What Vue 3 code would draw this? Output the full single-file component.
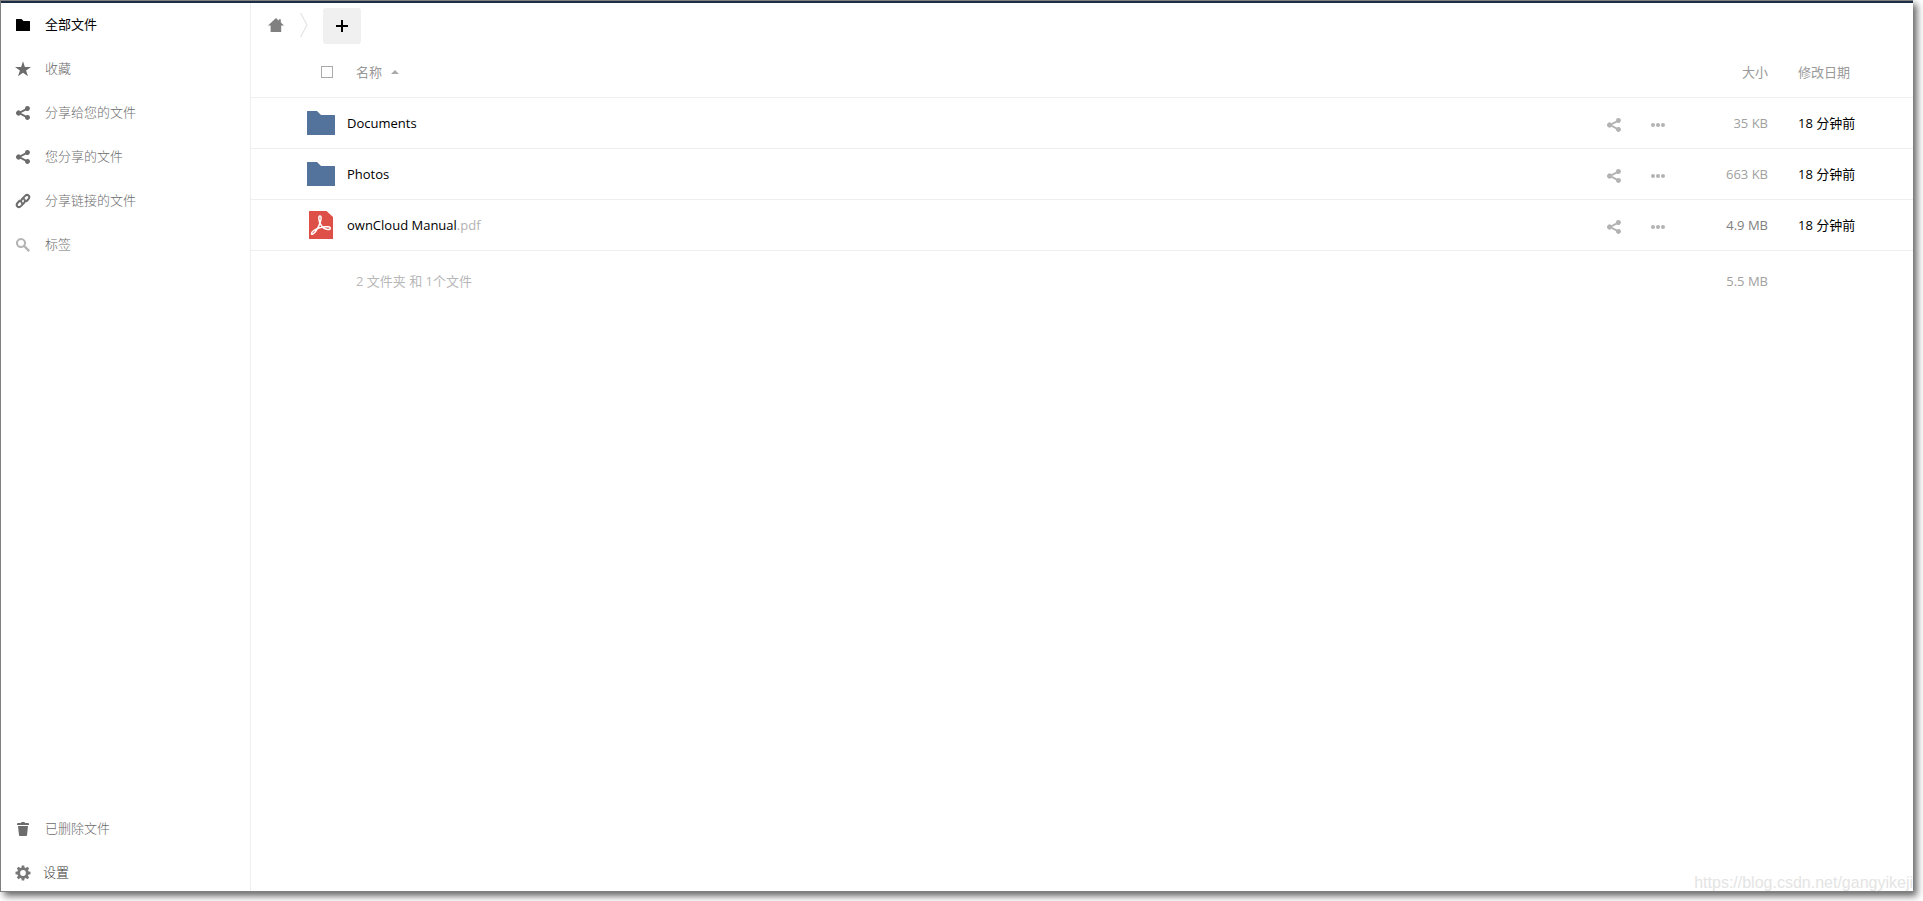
<template>
  <div class="page">
    <div class="window">
      <nav class="sidebar">
        <ul>
          <li v-for="item in menu" :key="item.label">
            <a href="#" :class="{ active: item.active }">
              <svg :class="['icon', { faded: item.faded, link: item.icon === 'link' }]" viewBox="0 0 16 16" aria-hidden="true">
                <path :d="icons[item.icon]" />
              </svg>
              <span>{{ item.label }}</span>
            </a>
          </li>
        </ul>
        <ul class="bottom">
          <li>
            <a href="#">
              <svg class="icon" viewBox="0 0 16 16" aria-hidden="true">
                <path :d="icons.trash" />
              </svg>
              <span>已删除文件</span>
            </a>
          </li>
          <li>
            <button type="button" class="settings">
              <svg class="icon" viewBox="0 0 16 16" aria-hidden="true">
                <circle cx="8" cy="8" r="4.3" fill="none" stroke="currentColor" stroke-width="2.8" />
                <path :d="icons.gear" />
              </svg>
              <span>设置</span>
            </button>
          </li>
        </ul>
      </nav>

      <main class="content">
        <div class="controls">
          <a href="#" class="home" aria-label="主页">
            <svg viewBox="0 0 16 16" aria-hidden="true">
              <path d="M8 1 0 8.6h2.6V15h10.6V8.6H16L12.8 5.6V2.2h-2v1.5z" />
            </svg>
          </a>
          <svg class="crumb" viewBox="0 0 8 24" aria-hidden="true">
            <path d="M.7 0 7 12 .7 24" />
          </svg>
          <button type="button" class="new" aria-label="新建">
            <svg viewBox="0 0 12 12" aria-hidden="true">
              <path d="M5 0h2v5h5v2H7v5H5V7H0V5h5z" />
            </svg>
          </button>
        </div>

        <table>
          <colgroup>
            <col class="col-icon" />
            <col />
            <col class="col-actions" />
            <col class="col-size" />
            <col class="col-date" />
          </colgroup>
          <thead>
            <tr>
              <th class="select">
                <input v-model="selectAll" type="checkbox" aria-label="全选" />
              </th>
              <th class="name-head">
                <button type="button" class="sort" @click="ascending = !ascending">
                  名称
                  <span :class="['arrow', { down: !ascending }]"></span>
                </button>
              </th>
              <th></th>
              <th class="size">大小</th>
              <th>修改日期</th>
            </tr>
          </thead>
          <tbody>
            <tr v-for="file in sortedFiles" :key="file.name">
              <td class="thumb">
                <svg v-if="file.type === 'dir'" viewBox="0 0 32 32" aria-hidden="true">
                  <path fill="#54739c" d="M2.500 4h9.500l4 4h13.500q.5 0 .5.5v19q0 .5-.5.5h-27q-.5 0-.5-.5v-23q0-.5.5-.5z" />
                </svg>
                <svg v-else viewBox="0 0 32 32" aria-hidden="true">
                  <path fill="#de5047" d="M4.500 2H21.500l6.500 6v21.500q0 .5-.5.5h-23q-.5 0-.5-.5v-27q0-.5.5-.5z" />
                  <path class="acrobat" d="M15 7c-1.900 0-1.300 4.500.5 8.200 2 3.800 5.500 5.600 8.500 5.200 2-.3 1.700-2.300-.8-2.600-4.500-.5-10.300.8-14.400 3.700-3.200 2.300-2.700 4.600-.9 3.500 2.700-1.800 6-7.500 7.600-12.500.9-3 .9-5.500-.5-5.500z" />
                </svg>
              </td>
              <td class="name">
                <a href="#">{{ file.name }}<span class="ext">{{ file.ext }}</span></a>
              </td>
              <td>
                <div class="actions">
                  <button type="button" aria-label="分享">
                    <svg viewBox="0 0 16 16" aria-hidden="true"><path :d="icons.share" /></svg>
                  </button>
                  <button type="button" aria-label="更多">
                    <svg viewBox="0 0 16 16" aria-hidden="true">
                      <circle cx="3" cy="8" r="2" />
                      <circle cx="8" cy="8" r="2" />
                      <circle cx="13" cy="8" r="2" />
                    </svg>
                  </button>
                </div>
              </td>
              <td :class="['size', { large: file.large }]">{{ file.size }}</td>
              <td>18 分钟前</td>
            </tr>
          </tbody>
          <tfoot>
            <tr>
              <td></td>
              <td class="summary">2 文件夹 和 1个文件</td>
              <td></td>
              <td class="size">5.5 MB</td>
              <td></td>
            </tr>
          </tfoot>
        </table>
      </main>
      <div class="watermark">https://blog.csdn.net/gangyikeji</div>
    </div>
  </div>
</template>

<script setup>
import { computed, ref } from 'vue'

const icons = {
  folder: 'M1.500 2h5l2 2H14.500q.5 0 .5.5v9q0 .5-.5.5h-13q-.5 0-.5-.5v-11q0-.5.5-.5z',
  star: 'M8 .3 9.900 5.900H16l-4.900 3.500 1.900 5.900L8 11.700 3 15.300l1.900-5.900L0 5.900h6.100z',
  share: 'M12.500 1a2.500 2.500 0 0 0-2.500 2.800L5.300 6.200a2.500 2.500 0 1 0 0 3.600l4.700 2.400a2.500 2.500 0 1 0 .9-1.700L6 8.100V7.900l4.900-2.400A2.500 2.500 0 1 0 12.500 1z',
  link: 'M7.200 10.200C5.800 9.100 5.800 7.400 6.900 6.200l3.200-3.300c2.500-2.400 5.600.5 3.400 3.100L11 8.700M8.800 5.800c1.400 1.100 1.400 2.800.3 4l-3.200 3.300c-2.500 2.400-5.600-.5-3.400-3.100L5 7.300',
  search: 'M6 1a5 5 0 1 0 2.700 9.200l4.700 4.700 1.600-1.600-4.700-4.700A5 5 0 0 0 6 1zm0 2a3 3 0 1 1 0 6 3 3 0 0 1 0-6z',
  trash: 'M6.500 1 6 2H3Q2 2 2 3v1h12V3q0-1-1-1h-3l-.5-1zM3 5l1 9.200q.1.800.9.800h6.200q.8 0 .9-.8L13 5z',
  gear: 'M6.800.5h2.400l.5 3H6.300zM6.800 15.500h2.400l.5-3H6.300zM.5 6.800v2.400l3 .5V6.300zM15.500 6.800v2.400l-3 .5V6.300zM1.800 3.500l1.700-1.700 2.500 1.800-2.400 2.400zM14.200 3.500l-1.700-1.700L10 3.600 12.400 6zM1.800 12.500l1.700 1.700L6 12.400 3.600 10zM14.200 12.500l-1.700 1.700-2.500-1.800 2.400-2.400z'
}

const menu = [
  { label: '全部文件', icon: 'folder', active: true },
  { label: '收藏', icon: 'star' },
  { label: '分享给您的文件', icon: 'share' },
  { label: '您分享的文件', icon: 'share' },
  { label: '分享链接的文件', icon: 'link' },
  { label: '标签', icon: 'search', faded: true }
]

const files = [
  { name: 'Documents', ext: '', type: 'dir', size: '35 KB' },
  { name: 'Photos', ext: '', type: 'dir', size: '663 KB' },
  { name: 'ownCloud Manual', ext: '.pdf', type: 'pdf', size: '4.9 MB', large: true }
]

const selectAll = ref(false)
const ascending = ref(true)

const sortedFiles = computed(() => ascending.value ? files : [...files].reverse())
</script>

<style>
body {
  background: #fff;
}
</style>

<style scoped>
.page {
  height: 100vh;
  box-sizing: border-box;
  padding: 0 10px 9px 0;
  overflow: hidden;
  font-family: "Open Sans", "Noto Sans CJK SC", sans-serif;
  font-size: 13px;
  line-height: 20px;
  color: #000;
}

.window {
  position: relative;
  display: flex;
  height: 100%;
  box-sizing: border-box;
  border: 1px solid #808080;
  border-right: none;
  background: #fff;
  box-shadow: 4px 4px 7px rgba(0, 0, 0, 0.6);
}

.window::before {
  content: "";
  position: absolute;
  top: 0;
  left: 0;
  right: 0;
  height: 2px;
  background: #1d2d44;
}

a {
  color: inherit;
  text-decoration: none;
}

button {
  font: inherit;
  color: inherit;
  background: none;
  border: none;
  padding: 0;
  cursor: pointer;
}

svg {
  display: block;
  fill: currentColor;
}

.sidebar {
  width: 250px;
  flex: none;
  box-sizing: border-box;
  padding-top: 2px;
  border-right: 1px solid #eee;
  display: flex;
  flex-direction: column;
  justify-content: space-between;
}

.sidebar ul {
  list-style: none;
  margin: 0;
  padding: 0;
}

.sidebar a,
.settings {
  display: flex;
  align-items: center;
  width: 100%;
  height: 44px;
  box-sizing: border-box;
  gap: 14px;
  padding-left: 14px;
  color: #6c6c6c;
  font-weight: 300;
}

.sidebar span {
  padding-bottom: 2px;
}

.sidebar a.active {
  color: #000;
  font-weight: 400;
}

.sidebar .settings {
  height: 40px;
  gap: 12px;
  padding-top: 4px;
  color: #333;
}

.icon {
  width: 16px;
  height: 16px;
}

.icon.faded {
  opacity: 0.5;
}

.icon.link {
  fill: none;
  stroke: currentColor;
  stroke-width: 2;
}

.settings .icon {
  color: #777;
}

.content {
  flex: 1;
  min-width: 0;
  padding-top: 2px;
}

.controls {
  display: flex;
  align-items: center;
  height: 44px;
  padding-left: 17px;
}

.home svg {
  width: 16px;
  height: 16px;
  color: #808080;
}

.crumb {
  width: 8px;
  height: 24px;
  margin: 0 15px 0 16px;
  fill: none;
  stroke: #ddd;
}

.new {
  display: flex;
  align-items: center;
  justify-content: center;
  width: 38px;
  height: 36px;
  margin-top: 2px;
  border-radius: 3px;
  background: #f0f0f0;
}

.new svg {
  width: 12px;
  height: 12px;
}

table {
  width: 100%;
  table-layout: fixed;
  border-collapse: separate;
  border-spacing: 0;
}

.col-icon {
  width: 96px;
}

.col-actions {
  width: 80px;
}

.col-size {
  width: 118px;
}

.col-date {
  width: 115px;
}

th,
td {
  height: 50px;
  padding: 0;
  border-bottom: 1px solid #eee;
  text-align: left;
  font-weight: 400;
}

th {
  color: #999;
}

.select input {
  appearance: none;
  display: block;
  box-sizing: border-box;
  width: 12px;
  height: 12px;
  margin: 0 0 0 70px;
  border: 1px solid #aaa;
  background: #fff;
}

.select input:checked {
  background: #54739c;
}

.name-head,
.summary {
  padding-left: 9px;
}

.sort {
  display: flex;
  align-items: center;
  gap: 9px;
}

.arrow {
  border: 4px solid transparent;
  border-top: none;
  border-bottom-color: #aaa;
}

.arrow.down {
  border-top: 4px solid #aaa;
  border-bottom: none;
}

.thumb svg {
  width: 32px;
  height: 32px;
  margin-left: 54px;
}

.acrobat {
  fill: none;
  stroke: #fff;
  stroke-width: 1.5;
}

.ext {
  color: #b3b3b3;
}

.actions {
  display: flex;
  gap: 28px;
  padding: 3px 0 0 6px;
  color: #b3b3b3;
}

.actions svg {
  width: 16px;
  height: 16px;
}

.size {
  padding-right: 30px;
  text-align: right;
  color: #a0a0a0;
}

.size.large {
  color: #808080;
}

th.size {
  color: #999;
}

tfoot td {
  height: 60px;
  border: none;
  color: #b8b8b8;
}

.watermark {
  position: absolute;
  right: 0;
  bottom: 0;
  white-space: nowrap;
  font-family: "Liberation Sans", sans-serif;
  font-size: 16px;
  line-height: 17px;
  color: #e4e4e4;
  pointer-events: none;
}
</style>
